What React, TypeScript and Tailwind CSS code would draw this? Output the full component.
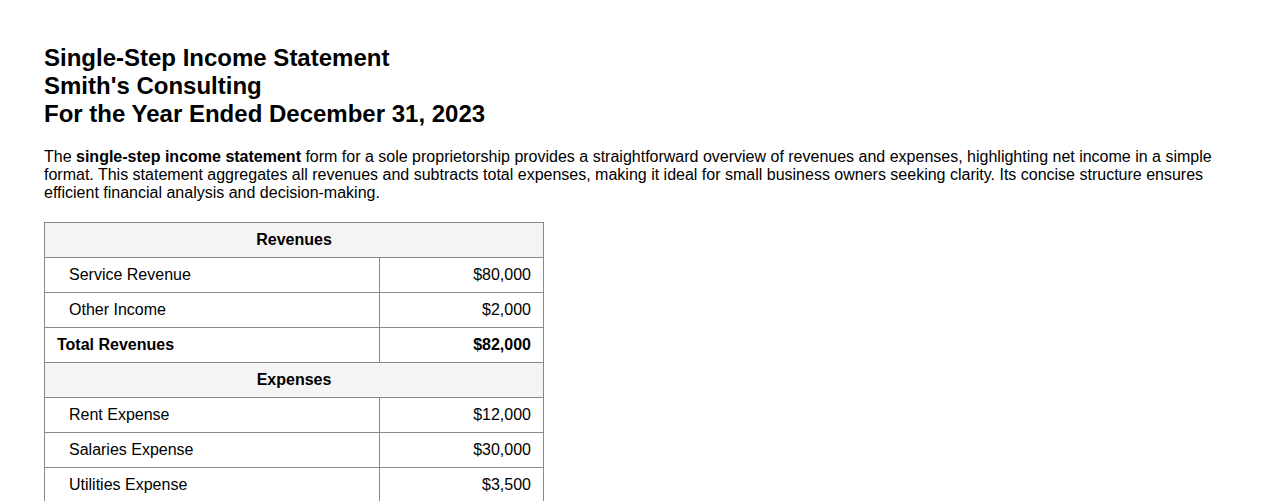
const revenues = [
  { label: "Service Revenue", amount: "$80,000" },
  { label: "Other Income", amount: "$2,000" },
];

const expenses = [
  { label: "Rent Expense", amount: "$12,000" },
  { label: "Salaries Expense", amount: "$30,000" },
  { label: "Utilities Expense", amount: "$3,500" },
];

const cell = "border border-[#888] px-3 py-2 leading-[18px]";

function SectionHeader({ title }: { title: string }) {
  return (
    <tr>
      <th colSpan={2} className={`${cell} bg-[#f4f4f4] text-center font-bold`}>
        {title}
      </th>
    </tr>
  );
}

function ItemRow({ label, amount }: { label: string; amount: string }) {
  return (
    <tr>
      <td className={`${cell} pl-[24px]`}>{label}</td>
      <td className={`${cell} text-right`}>{amount}</td>
    </tr>
  );
}

export default function App() {
  return (
    <div className="min-h-screen bg-white px-[44px] pt-[44px] pb-10 text-black font-['Liberation_Sans',Arial,sans-serif]">
      <h1 className="text-[24px] leading-[28px] font-bold">
        Single-Step Income Statement
        <br />
        Smith's Consulting
        <br />
        For the Year Ended December 31, 2023
      </h1>

      <p className="mt-5 text-[16px] leading-[18px]">
        The <strong>single-step income statement</strong> form for a sole proprietorship provides a straightforward
        overview of revenues and expenses, highlighting net income in a simple format. This statement aggregates all
        revenues and subtracts total expenses, making it ideal for small business owners seeking clarity. Its concise
        structure ensures efficient financial analysis and decision-making.
      </p>

      <table className="mt-5 w-[500px] border-collapse text-[16px]">
        <colgroup>
          <col className="w-[335px]" />
          <col />
        </colgroup>
        <tbody>
          <SectionHeader title="Revenues" />
          {revenues.map((r) => (
            <ItemRow key={r.label} {...r} />
          ))}
          <tr>
            <td className={`${cell} font-bold`}>Total Revenues</td>
            <td className={`${cell} text-right font-bold`}>$82,000</td>
          </tr>
          <SectionHeader title="Expenses" />
          {expenses.map((r) => (
            <ItemRow key={r.label} {...r} />
          ))}
          <tr>
            <td className={`${cell} font-bold`}>Total Expenses</td>
            <td className={`${cell} text-right font-bold`}>$45,500</td>
          </tr>
          <tr>
            <td className={`${cell} font-bold`}>Net Income</td>
            <td className={`${cell} text-right font-bold`}>$36,500</td>
          </tr>
        </tbody>
      </table>
    </div>
  );
}
